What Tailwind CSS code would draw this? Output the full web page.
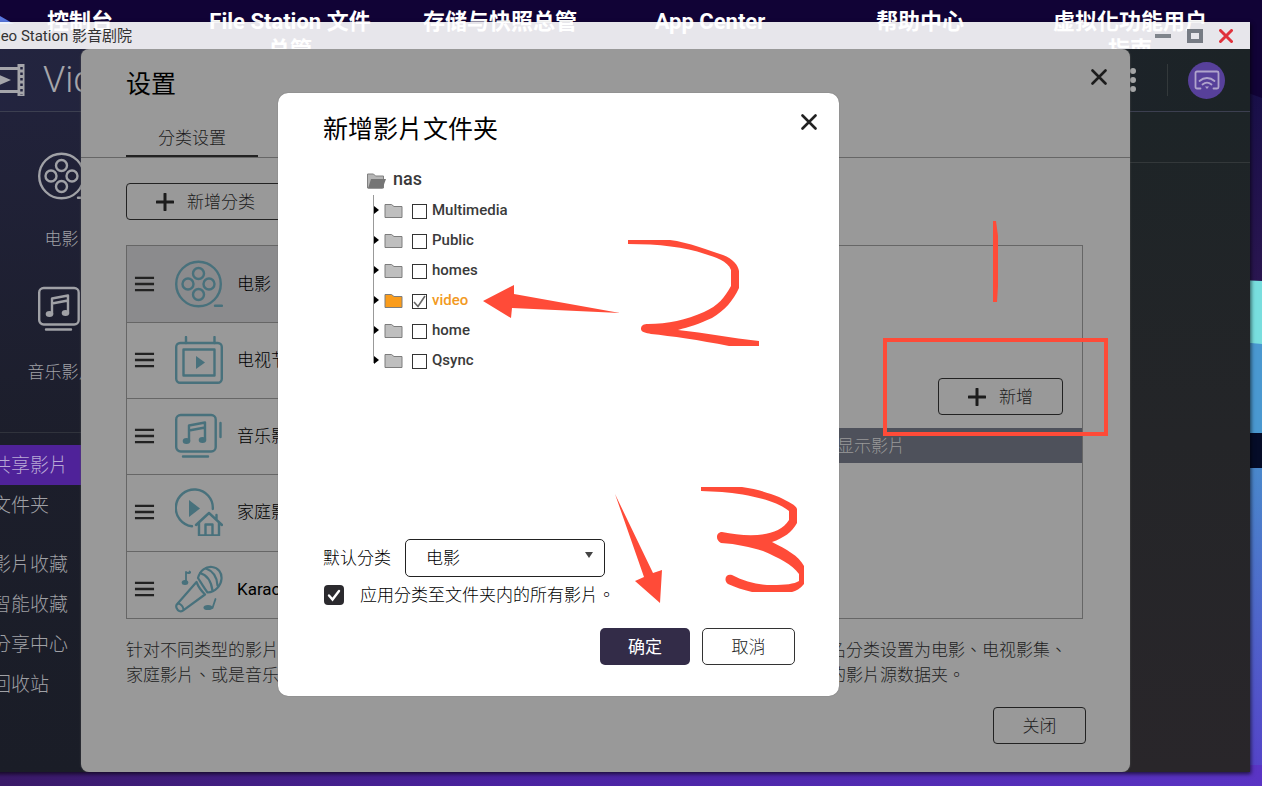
<!doctype html>
<html lang="zh-Hant">
<head>
  <meta charset="UTF-8" />
  <meta name="viewport" content="width=device-width, initial-scale=1.0" />
  <title>Video Station 影音剧院</title>
  <script src="https://cdn.jsdelivr.net/npm/@tailwindcss/browser@4"></script>
</head>
<body class="relative h-screen overflow-hidden bg-[#110336] font-['Roboto','Noto_Sans_CJK_TC',sans-serif] font-light text-[17px] leading-6 text-black">
  <!-- Shared icons -->
  <svg class="hidden">
    <symbol id="reel" viewBox="0 0 48 48">
      <g fill="none" stroke="currentColor" stroke-width="2.4" stroke-linecap="round">
        <circle cx="23.5" cy="24" r="22.3" />
        <circle cx="23.5" cy="13.5" r="5.5" />
        <circle cx="13" cy="24" r="5.5" />
        <circle cx="34" cy="24" r="5.5" />
        <circle cx="23.5" cy="34.5" r="5.5" />
        <path d="M40 45.8h7" />
      </g>
    </symbol>
    <symbol id="tv" viewBox="0 0 48 48">
      <g fill="none" stroke="currentColor" stroke-width="2.4" stroke-linecap="round" stroke-linejoin="round">
        <rect x="1.2" y="7" width="45.6" height="39.8" rx="4" />
        <rect x="8.5" y="13.5" width="31" height="26" />
        <path d="M11 1v6M39.5 1v6" />
      </g>
      <path d="M21 20v13l9-6.5z" fill="currentColor" />
    </symbol>
    <symbol id="music" viewBox="0 0 48 48">
      <g fill="none" stroke="currentColor" stroke-width="2.4" stroke-linecap="round" stroke-linejoin="round">
        <rect x="1.2" y="3" width="39.5" height="36.5" rx="4.5" />
        <path d="M8 44.5h25M45.5 11v14" />
        <path d="M14 29V13.5l16-3V27M14 18.5l16-3" />
      </g>
      <ellipse cx="11.5" cy="29" rx="3.8" ry="2.9" fill="currentColor" />
      <ellipse cx="27.5" cy="28" rx="3.8" ry="2.9" fill="currentColor" />
    </symbol>
    <symbol id="family" viewBox="0 0 48 48">
      <g fill="none" stroke="currentColor" stroke-width="2.4" stroke-linecap="round" stroke-linejoin="round">
        <path d="M17 38.3A18.5 18.5 0 1 1 37.8 21" />
        <path d="M21 37 34 25l13 12M24 35v12.500h20V35M30.500 47V36.500h7V47M41.500 31v-4" />
      </g>
      <path d="M14 12v17l11-8.500z" fill="currentColor" />
    </symbol>
    <symbol id="mic" viewBox="0 0 48 48">
      <g fill="none" stroke="currentColor" stroke-width="2.2" stroke-linecap="round" stroke-linejoin="round">
        <path d="M23 13C25 5 31 1.500 37 2c6 .5 10 5.500 9.500 12-.5 6.500-6 13-14 13.500-3-4-6-9-9.500-14.500z" />
        <path d="M21.500 17 1.800 39.500c-1.500 2 .2 5.500 2.500 6.500 1.500.6 3 .3 4.300-.8L30 29.500c-3-3-6.500-7-8.500-12.500z" />
        <path d="M25 8c7 2 11 7 12.500 17.500M31 3.500c7 2.500 11 8 11.500 17" />
        <path d="M3 38.500c3 .5 5 3 5.500 6M11 17V7c3 2 5.500.5 3.500-.5M40.500 34l-3 9" stroke-width="1.8" />
      </g>
      <ellipse cx="10" cy="17.5" rx="3.3" ry="2.5" fill="currentColor" />
      <ellipse cx="33" cy="42.5" rx="4.5" ry="2.6" fill="currentColor" />
    </symbol>
    <symbol id="drag" viewBox="0 0 22 16">
      <path d="M1 1.500h20M1 8h20M1 14.500h20" stroke="currentColor" stroke-width="2.4" />
    </symbol>
    <symbol id="plus" viewBox="0 0 18 18">
      <path d="M9 1v16M1 9h16" stroke="currentColor" stroke-width="3" stroke-linecap="round" />
    </symbol>
    <symbol id="cross" viewBox="0 0 16 16">
      <path d="M1.500 1.500l13 13M14.500 1.500l-13 13" stroke="currentColor" stroke-width="2.6" stroke-linecap="round" />
    </symbol>
    <symbol id="folder" viewBox="0 0 19 16">
      <path d="M1 1.500h6.500l2.500 2h8V14.500H1z" fill="currentColor" stroke="#7d7d7d" />
    </symbol>
  </svg>

  <!-- Wallpaper -->
  <svg class="absolute inset-0 size-full" viewBox="0 0 1262 786" preserveAspectRatio="none">
    <defs>
      <linearGradient id="floor" x1="0" x2="1" y1="0" y2="0">
        <stop offset="0" stop-color="#3a1a68" />
        <stop offset=".4" stop-color="#4a22a0" />
        <stop offset="1" stop-color="#5a34c4" />
      </linearGradient>
      <linearGradient id="wall" x1="0" x2="0" y1="0" y2="1">
        <stop offset="0" stop-color="#4a88cc" />
        <stop offset="1" stop-color="#5540c8" />
      </linearGradient>
      <linearGradient id="dusk" x1="0" x2="0" y1="0" y2="1">
        <stop offset="0" stop-color="#180f48" />
        <stop offset="1" stop-color="#2a1650" />
      </linearGradient>
    </defs>
    <path d="M0 16l14 8H0z" fill="#5a78e0" />
    <path d="M1240 90l22 8v184h-22z" fill="url(#dusk)" />
    <path d="M1240 280l22 1v63h-22z" fill="#78dede" />
    <path d="M1240 342l22 2v89h-22z" fill="#4a98d0" />
    <path d="M1240 433h22v35h-22z" fill="#050c28" />
    <path d="M1240 468h22v318h-22z" fill="url(#wall)" />
    <path d="M0 765h1262v21H0z" fill="url(#floor)" />
  </svg>

  <!-- Desktop shortcuts -->
  <div class="absolute inset-x-[-25px] top-2 grid grid-cols-[repeat(6,210px)] justify-start text-center text-[22px] font-bold leading-7 text-white">
    <a href="#" class="px-4">控制台</a>
    <a href="#" class="px-4">File Station 文件<br />总管</a>
    <a href="#" class="px-4">存储与快照总管</a>
    <a href="#" class="px-4">App Center</a>
    <a href="#" class="px-4">帮助中心</a>
    <a href="#" class="px-4">虚拟化功能用户<br />指南</a>
  </div>

  <!-- Application window -->
  <div class="absolute top-[22px] right-3 bottom-[14px] left-[-37px] flex flex-col shadow-[1px_2px_4px_#000a]">
    <header class="flex h-[27px] shrink-0 items-center justify-between bg-white/90 pr-[17px] pl-4 text-[15px] font-normal text-[#333]">
      <span>Video Station 影音剧院</span>
      <div class="flex items-center gap-4">
        <button aria-label="最小化" class="h-1 w-4 bg-[#80858c]"></button>
        <button aria-label="最大化" class="h-[14px] w-4 border-4 border-[#767b84]"></button>
        <button aria-label="关闭窗口" class="text-[#e0323c]">
          <svg class="size-[14px]" viewBox="0 0 14 14"><path d="M1.500 1.500l11 11M12.500 1.500l-11 11" stroke="currentColor" stroke-width="3" stroke-linecap="round" /></svg>
        </button>
      </div>
    </header>

    <main class="relative flex min-h-0 grow flex-col overflow-hidden bg-[#1d1e2b]">
      <div class="flex h-[63px] shrink-0 items-center justify-between border-b border-[#3c3f50] bg-linear-to-r from-[#232440] to-[#1c2326] pr-[25px] pl-[18px]">
        <div class="flex items-center gap-[18px] text-[#a5a5aa]">
          <svg class="h-8 w-[44px]" viewBox="0 0 44 32" fill="none" stroke="currentColor">
            <path d="M2 4.500h36M2 27.500h36" stroke-width="3" />
            <path d="M40 0v32M4 0v32" stroke-width="7" />
            <path d="M40.500 3v28M4 3v28" stroke="#232440" stroke-width="2.5" stroke-dasharray="2.5 3" />
            <path d="M14 9v14l16-7z" fill="currentColor" stroke="none" />
          </svg>
          <span class="text-[36px] leading-10">Video Station</span>
        </div>
        <div class="flex items-center gap-5">
          <button aria-label="更多" class="flex w-[18px] flex-col items-center gap-[3px]">
            <span class="size-1.5 rounded-full bg-[#a4a5a6]"></span>
            <span class="size-1.5 rounded-full bg-[#a4a5a6]"></span>
            <span class="size-1.5 rounded-full bg-[#a4a5a6]"></span>
          </button>
          <span class="ml-[5px] h-8 w-px bg-[#33393b]"></span>
          <button aria-label="投放" class="flex size-[37px] items-center justify-center rounded-full bg-[#57409a] text-[#b0a4cc]">
            <svg class="h-5 w-[26px]" viewBox="0 0 26 20" fill="none" stroke="currentColor" stroke-width="1.8" stroke-linecap="round">
              <path d="M6.500 18.500H3a1.500 1.500 0 0 1-1.500-1.500V3A1.500 1.500 0 0 1 3 1.500h20A1.500 1.500 0 0 1 24.500 3v14a1.500 1.500 0 0 1-1.500 1.500h-3.500" />
              <path d="M5.500 11c4.500-4 10.500-4 15 0M8.500 14.500c3-2.500 6-2.500 9 0" />
              <path d="M11 16.500h4L13 19z" fill="currentColor" stroke="none" />
            </svg>
          </button>
        </div>
      </div>

      <div class="flex min-h-0 grow">
        <nav class="flex w-[197px] shrink-0 flex-col bg-linear-to-b from-[#21223a] via-[#1c1e2b] to-[#1a1d27] text-[19px] text-[#a0a1a6]">
          <div class="flex h-[321px] flex-col items-center border-b border-[#30333c] pt-10 text-[17px]">
            <a href="#" class="flex h-[133px] flex-col items-center gap-[27px]">
              <svg class="size-12"><use href="#reel" /></svg>电影
            </a>
            <a href="#" class="flex flex-col items-center gap-[27px]">
              <svg class="size-12"><use href="#music" /></svg>音乐影片
            </a>
          </div>
          <div class="mt-3 flex flex-col">
            <a href="#" class="flex h-10 items-center bg-[#4f2299] pt-0.5 pl-[29px] text-[#b9a9d6]">共享影片</a>
            <a href="#" class="flex h-10 items-center pt-0.5 pl-[29px]">文件夹</a>
          </div>
          <div class="mt-[19px] flex flex-col">
            <a href="#" class="flex h-10 items-center pt-0.5 pl-[29px]">影片收藏</a>
            <a href="#" class="flex h-10 items-center pt-0.5 pl-[29px]">智能收藏</a>
            <a href="#" class="flex h-10 items-center pt-0.5 pl-[29px]">分享中心</a>
            <a href="#" class="flex h-10 items-center pt-0.5 pl-[29px]">回收站</a>
          </div>
        </nav>
        <div class="grow bg-linear-to-b from-[#1d2427] via-[#242528] to-[#29262a]">
          <div class="h-[51px] border-b border-[#33383a]"></div>
        </div>
      </div>

      <!-- Settings dialog -->
      <section class="absolute inset-y-0 right-[120px] left-[118px] flex flex-col rounded-lg bg-[#999] text-[#1c1c1c] shadow-[0_0_2px_#555]">
        <div class="flex h-[68px] shrink-0 items-center justify-between pr-[23px] pl-[45px]">
          <h1 class="pt-[3px] text-[25px] font-normal text-black">设置</h1>
          <button aria-label="关闭设置" class="-mt-3"><svg class="size-4"><use href="#cross" /></svg></button>
        </div>
        <div class="flex h-[41px] shrink-0 items-end border-b border-[#666] pl-[45px]">
          <button class="h-10 w-[132px] border-b-2 border-[#222] pt-[3px]">分类设置</button>
        </div>
        <div class="flex grow flex-col pt-[25px] pr-[43px] pl-[45px]">
          <button class="flex h-[37px] w-[172px] shrink-0 items-center gap-[13px] rounded border border-[#222] pl-[29px]">
            <svg class="size-[18px]"><use href="#plus" /></svg>新增分类
          </button>

          <div class="mt-[25px] mr-1 flex h-[374px] shrink-0 border border-[#666]">
            <ul class="w-[240px] shrink-0 overflow-hidden border-r border-[#666] text-black">
              <li class="flex h-[77px] items-center gap-5 border-b border-[#666] bg-[#8b8b8d] pl-[7px]">
                <svg class="h-4 w-[21px] text-[#222]"><use href="#drag" /></svg>
                <svg class="size-12 text-[#48717c]"><use href="#reel" /></svg>
                <span class="-ml-1.5">电影</span>
              </li>
              <li class="flex h-[76px] items-center gap-5 border-b border-[#666] pb-0.5 pl-[7px]">
                <svg class="h-4 w-[21px] text-[#222]"><use href="#drag" /></svg>
                <svg class="size-12 text-[#48717c]"><use href="#tv" /></svg>
                <span class="-ml-1.5">电视节目</span>
              </li>
              <li class="flex h-[76px] items-center gap-5 border-b border-[#666] pb-0.5 pl-[7px]">
                <svg class="h-4 w-[21px] text-[#222]"><use href="#drag" /></svg>
                <svg class="size-12 text-[#48717c]"><use href="#music" /></svg>
                <span class="-ml-1.5">音乐影片</span>
              </li>
              <li class="flex h-[77px] items-center gap-5 border-b border-[#666] pb-0.5 pl-[7px]">
                <svg class="h-4 w-[21px] text-[#222]"><use href="#drag" /></svg>
                <svg class="size-12 text-[#48717c]"><use href="#family" /></svg>
                <span class="-ml-1.5">家庭影片</span>
              </li>
              <li class="flex h-[76px] items-center gap-5 pb-0.5 pl-[7px]">
                <svg class="h-4 w-[21px] text-[#222]"><use href="#drag" /></svg>
                <svg class="size-12 text-[#48717c]"><use href="#mic" /></svg>
                <span class="-ml-1.5 font-normal">Karaoke</span>
              </li>
            </ul>
            <div class="flex grow flex-col">
              <div class="flex h-[182px] items-end justify-end pr-[19px] pb-[13px]">
                <button class="flex h-[37px] w-[125px] items-center gap-[13px] rounded border border-[#222] pl-[29px]">
                  <svg class="size-[18px]"><use href="#plus" /></svg>新增
                </button>
              </div>
              <div class="flex h-[35px] items-center justify-end bg-[#4e515b] pr-[177px] text-[#999]">显示影片</div>
            </div>
          </div>

          <div class="mt-[19px] grid grid-cols-[703px_1fr] text-[#222]">
            <p class="leading-[25px]">针对不同类型的影片<br />家庭影片、或是音乐</p>
            <p class="whitespace-nowrap leading-[25px]">名分类设置为电影、电视影集、<br />的影片源数据夹。</p>
          </div>
        </div>
        <div class="flex justify-end pr-11 pb-7">
          <button class="h-[37px] w-[93px] rounded border border-[#222]">关闭</button>
        </div>
      </section>

      <!-- Add folder dialog -->
      <section class="absolute top-11 left-[315px] flex h-[603px] w-[561px] flex-col rounded-[10px] bg-white pr-11 pl-[45px] shadow-[0_0_1px_#555]">
        <div class="-mr-[22px] flex h-[70px] items-center justify-between">
          <h2 class="pt-[3px] text-[25px] font-normal">新增影片文件夹</h2>
          <button aria-label="关闭" class="-mt-3 text-[#222]"><svg class="size-4"><use href="#cross" /></svg></button>
        </div>

        <div class="grow pl-11 text-[15px] font-medium text-[#3a3a3a]">
          <div class="flex h-8 items-center gap-[7px] text-[18px]">
            <svg class="mt-1 h-4 w-[19px]" viewBox="0 0 19 16">
              <path d="M.5 15V1h6l2 2h8v12z" fill="#b5b5b5" stroke="#808080" />
              <path d="M1 15.500 4 6h15l-3.500 9.500z" fill="#757575" />
            </svg>nas
          </div>
          <ul class="ml-1.5 h-[168px] border-l border-[#999]">
            <li class="flex h-[30px] items-center gap-[9px]">
              <span class="-mr-1 size-0 border-y-4 border-l-[5px] border-y-transparent border-l-black"></span>
              <svg class="mt-0.5 h-4 w-[19px] text-[#bfbfbf]"><use href="#folder" /></svg>
              <label class="flex items-center gap-[5px]"><input type="checkbox" class="mt-0.5 size-[15px] appearance-none border border-[#333]" />Multimedia</label>
            </li>
            <li class="flex h-[30px] items-center gap-[9px]">
              <span class="-mr-1 size-0 border-y-4 border-l-[5px] border-y-transparent border-l-black"></span>
              <svg class="mt-0.5 h-4 w-[19px] text-[#bfbfbf]"><use href="#folder" /></svg>
              <label class="flex items-center gap-[5px]"><input type="checkbox" class="mt-0.5 size-[15px] appearance-none border border-[#333]" />Public</label>
            </li>
            <li class="flex h-[30px] items-center gap-[9px]">
              <span class="-mr-1 size-0 border-y-4 border-l-[5px] border-y-transparent border-l-black"></span>
              <svg class="mt-0.5 h-4 w-[19px] text-[#bfbfbf]"><use href="#folder" /></svg>
              <label class="flex items-center gap-[5px]"><input type="checkbox" class="mt-0.5 size-[15px] appearance-none border border-[#333]" />homes</label>
            </li>
            <li class="flex h-[30px] items-center gap-[9px]">
              <span class="-mr-1 size-0 border-y-4 border-l-[5px] border-y-transparent border-l-black"></span>
              <svg class="mt-0.5 h-4 w-[19px] text-[#fa9c1b]"><use href="#folder" /></svg>
              <label class="relative flex items-center gap-[5px] text-[#f29a22]">
                <input type="checkbox" checked class="mt-0.5 size-[15px] appearance-none border border-[#333]" />video
                <svg class="pointer-events-none absolute left-0 mt-0.5 size-[15px]" viewBox="0 0 15 15"><path d="M2 8l4 4.500L13 2" fill="none" stroke="#666" stroke-width="1.6" /></svg>
              </label>
            </li>
            <li class="flex h-[30px] items-center gap-[9px]">
              <span class="-mr-1 size-0 border-y-4 border-l-[5px] border-y-transparent border-l-black"></span>
              <svg class="mt-0.5 h-4 w-[19px] text-[#bfbfbf]"><use href="#folder" /></svg>
              <label class="flex items-center gap-[5px]"><input type="checkbox" class="mt-0.5 size-[15px] appearance-none border border-[#333]" />home</label>
            </li>
            <li class="flex h-[30px] items-center gap-[9px]">
              <span class="-mr-1 size-0 border-y-4 border-l-[5px] border-y-transparent border-l-black"></span>
              <svg class="mt-0.5 h-4 w-[19px] text-[#bfbfbf]"><use href="#folder" /></svg>
              <label class="flex items-center gap-[5px]"><input type="checkbox" class="mt-0.5 size-[15px] appearance-none border border-[#333]" />Qsync</label>
            </li>
          </ul>
        </div>

        <div class="flex items-center gap-[14px]">
          <label for="category">默认分类</label>
          <div class="relative">
            <select id="category" class="h-[38px] w-[200px] appearance-none rounded-[5px] border border-[#222] pl-5">
              <option>电影</option>
            </select>
            <span class="pointer-events-none absolute top-[13px] right-3 size-0 border-x-4 border-t-[6px] border-x-transparent border-t-[#444]"></span>
          </div>
        </div>
        <label class="relative mt-1.5 flex items-center gap-4">
          <input type="checkbox" checked class="ml-px size-5 appearance-none rounded bg-[#2b2a2e]" />
          <svg class="pointer-events-none absolute left-px size-5" viewBox="0 0 20 20"><path d="M5 10.500l3.500 4L15 6" fill="none" stroke="#fff" stroke-width="2.4" stroke-linecap="round" /></svg>
          应用分类至文件夹内的所有影片。
        </label>
        <div class="mt-[21px] mb-[31px] flex justify-end gap-3">
          <button class="h-[37px] w-[90px] rounded-[5px] bg-[#332c48] font-normal text-white">确定</button>
          <button class="h-[37px] w-[93px] rounded-[5px] border border-[#333] text-[#222]">取消</button>
        </div>
      </section>
    </main>
  </div>

  <!-- Hand-drawn step marks -->
  <svg class="pointer-events-none absolute top-0 left-0" width="1262" height="786" viewBox="0 0 1262 786" fill="none" stroke="#ff4b38">
    <path d="M993 221h3l2 15v50l-1 16h-4z" fill="#ff4b38" stroke="none" />
    <path d="M885 340h221v94H885z" stroke-width="4" />
    <path d="M483 301l31-16v9l106 19-108-5-1 10z" fill="#ff4b38" stroke="none" />
    <path d="M628 240h42c18 2 40 11 53 15 10 4 15 10 16 16v17c-6 13-14 22-27 30-13 6-23 9-34 12 28 3 53 8 81 11v5h-30c-30-6-58-10-78-12-5-1-10-2-10-5 0-4 3-5 7-5 20 0 38-4 56-12 14-6 21-15 27-26v-16c-3-9-16-13-26-16-20-7-46-10-77-10z" fill="#ff4b38" stroke="none" />
    <path d="M615 494l38 79 9-3-2 33-25-22 9-4z" fill="#ff4b38" stroke="none" />
    <path d="M701 487h41c15 2 27 6 37 10 10 5 17 8 18 12v14c-5 9-13 15-25 19 14 7 27 14 32 24v18c-4 5-8 7-12 8h-40c-9-2-17-5-24-8-5-4-2-11 4-9 13 7 26 10 40 10 14 0 22-1 27-4v-7c-7-10-20-16-36-23-13-4-26-7-42-8-6-3-5-11 1-11 25 5 56 6 67-12v-9c-15-12-45-17-67-19l-21-1z" fill="#ff4b38" stroke="none" />
  </svg>
</body>
</html>
